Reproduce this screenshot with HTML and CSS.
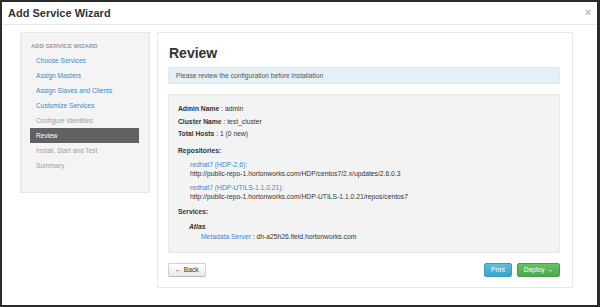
FILE: index.html
```html
<!DOCTYPE html>
<html>
<head>
<meta charset="utf-8">
<link rel="stylesheet" href="styles.css">
</head>
<body>
<div class="modal">
  <div class="modal-header">
    <h3 class="title">Add Service Wizard</h3>
    <span class="close">×</span>
  </div>
  <div class="modal-body">
    <div class="sidebar">
      <div class="nav-header">ADD SERVICE WIZARD</div>
      <a class="nav-item link">Choose Services</a>
      <a class="nav-item link">Assign Masters</a>
      <a class="nav-item link">Assign Slaves and Clients</a>
      <a class="nav-item link">Customize Services</a>
      <a class="nav-item muted">Configure Identities</a>
      <a class="nav-item active">Review</a>
      <a class="nav-item muted">Install, Start and Test</a>
      <a class="nav-item muted">Summary</a>
    </div>
    <div class="content">
      <h2 class="heading">Review</h2>
      <div class="alert">Please review the configuration before installation</div>
      <div class="review">
        <p class="kv"><b>Admin Name</b> : admin</p>
        <p class="kv"><b>Cluster Name</b> : test_cluster</p>
        <p class="kv"><b>Total Hosts</b> : 1 (0 new)</p>
        <p class="section"><b>Repositories:</b></p>
        <div class="repo">
          <div class="line"><a class="link">redhat7 (HDP-2.6):</a></div>
          <div class="line">http://public-repo-1.hortonworks.com/HDP/centos7/2.x/updates/2.6.0.3</div>
        </div>
        <div class="repo">
          <div class="line"><a class="link">redhat7 (HDP-UTILS-1.1.0.21):</a></div>
          <div class="line">http://public-repo-1.hortonworks.com/HDP-UTILS-1.1.0.21/repos/centos7</div>
        </div>
        <p class="section services"><b>Services:</b></p>
        <div class="service">
          <div class="svc-name">Atlas</div>
          <div class="svc-comp"><a class="link">Metadata Server</a> : dh-a25h26.field.hortonworks.com</div>
        </div>
      </div>
      <div class="actions">
        <button class="btn btn-default">← Back</button>
        <div class="right">
          <button class="btn btn-info">Print</button>
          <button class="btn btn-success">Deploy →</button>
        </div>
      </div>
    </div>
  </div>
</div>
</body>
</html>
```
FILE: styles.css
```css
* { box-sizing: border-box; }
html, body {
  margin: 0;
  padding: 0;
  width: 600px;
  height: 307px;
  background: #2b2b2b;
  overflow: hidden;
  font-family: "Liberation Sans", Arial, Helvetica, sans-serif;
  color: #333;
}
body { padding: 2px 3px 2px 2px; }
.modal {
  width: 595px;
  height: 303px;
  background: #fff;
  display: flex;
  flex-direction: column;
}
.modal-header {
  height: 23px;
  border-bottom: 1px solid #e9e9e9;
  display: flex;
  align-items: center;
  justify-content: space-between;
  padding: 0 6px 0 6px;
}
.title {
  margin: 0;
  font-size: 11px;
  font-weight: bold;
  line-height: 22px;
  color: #333;
}
.close {
  color: #b5b5b5;
  font-size: 10px;
  font-weight: bold;
  line-height: 22px;
}
.modal-body {
  display: flex;
  align-items: flex-start;
  gap: 7px;
  padding: 7px 24px 0 18px;
}
.sidebar {
  width: 130px;
  background: #f4f4f4;
  border: 1px solid #e6e6e6;
  padding: 7px 10px 19px 9px;
  display: flex;
  flex-direction: column;
}
.nav-header {
  font-size: 6px;
  font-weight: bold;
  color: #999;
  line-height: 13px;
  padding-left: 1px;
}
.nav-item {
  font-size: 6.6px;
  line-height: 15px;
  padding-left: 6px;
}
.link { color: #3b8ac8; }
.muted { color: #a0a0a0; }
.nav-item.active {
  background: #616161;
  color: #fff;
}
.content {
  width: 416px;
  height: 256px;
  border: 1px solid #e8e8e8;
  padding: 12px 12px 0 10px;
}
.heading {
  margin: 0 0 6px 1px;
  font-size: 14px;
  line-height: 16px;
  font-weight: bold;
  color: #333;
}
.alert {
  height: 17px;
  background: #e5f0f6;
  border: 1px solid #dbe8ef;
  border-radius: 2px;
  font-size: 6.7px;
  line-height: 15px;
  color: #555;
  padding: 0 7px;
  margin-bottom: 10px;
}
.review {
  height: 159px;
  background: #f3f3f3;
  border: 1px solid #e8e8e8;
  padding: 8px 9px 0 9px;
  font-size: 6.75px;
  color: #333;
}
.kv {
  margin: 0;
  line-height: 12.5px;
}
.section {
  margin: 5.5px 0 0 0;
  line-height: 9px;
}
.repo {
  padding-left: 12px;
  margin-top: 5px;
}
.repo + .repo { margin-top: 5px; }
.line { line-height: 9px; }
.services { margin-top: 6px; }
.service {
  margin-top: 6px;
  padding-left: 11px;
}
.svc-name {
  font-weight: bold;
  font-style: italic;
  line-height: 10px;
}
.svc-comp {
  padding-left: 12px;
  line-height: 9px;
}
.actions {
  display: flex;
  justify-content: space-between;
  margin-top: 10px;
}
.right {
  display: flex;
  gap: 5px;
}
.btn {
  font-family: "Liberation Sans", Arial, sans-serif;
  font-size: 6.7px;
  height: 14px;
  line-height: 12px;
  padding: 0;
  white-space: nowrap;
  border-radius: 2px;
  border: 1px solid #ccc;
  cursor: pointer;
}
.btn-default {
  width: 38px;
  background: linear-gradient(#fff, #e8e8e8);
  color: #333;
  border-color: #d0d0d0 #d0d0d0 #b8b8b8;
}
.btn-info {
  width: 28px;
  background: linear-gradient(#5bc0de, #3aa4c6);
  border-color: #3a9dbd;
  color: #fff;
}
.btn-success {
  width: 43px;
  background: linear-gradient(#62c462, #4ea84e);
  border-color: #4a9e4a;
  color: #fff;
}
```
